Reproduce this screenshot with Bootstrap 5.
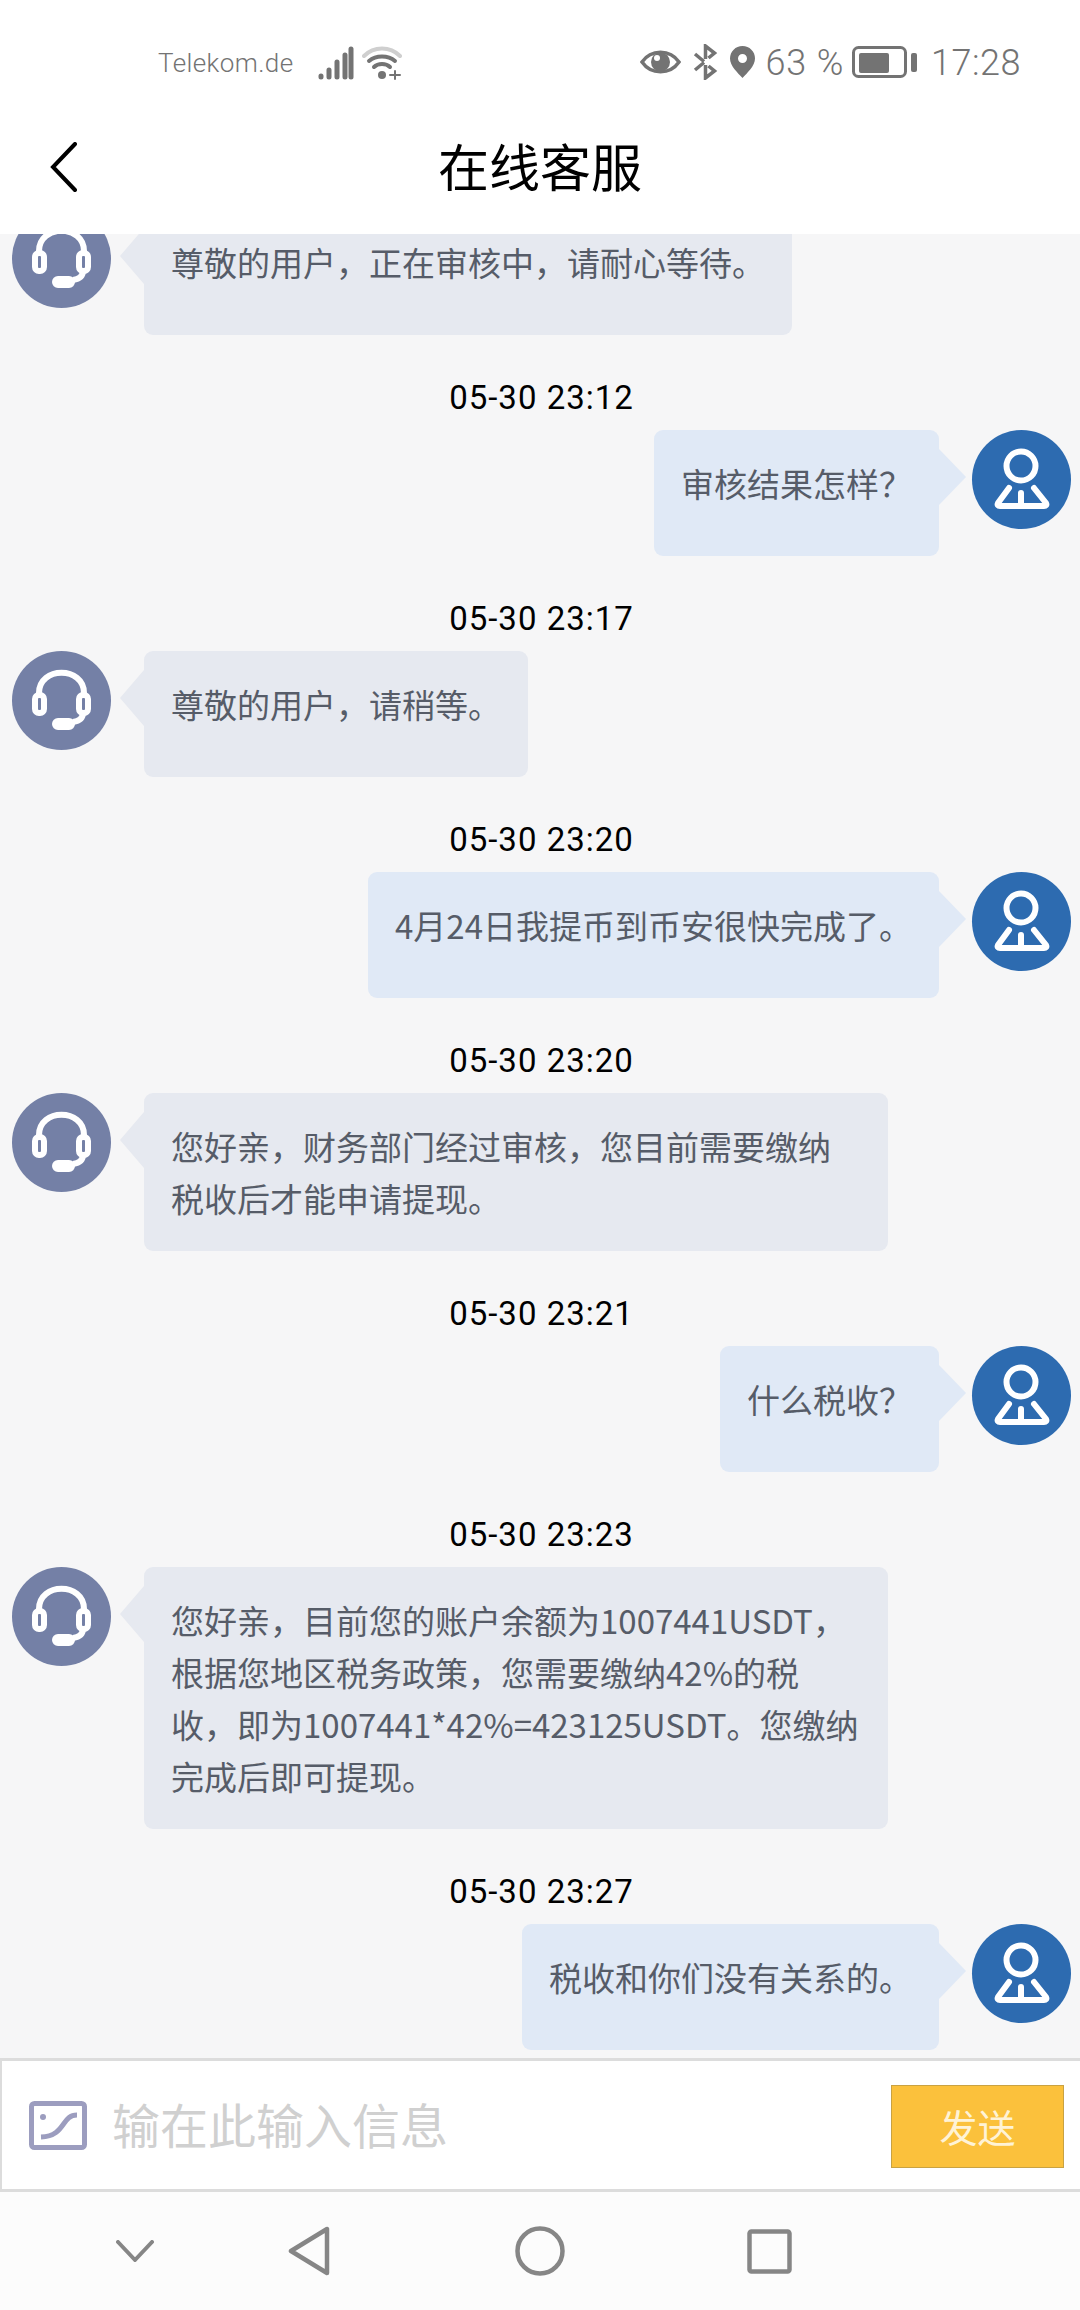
<!DOCTYPE html>
<html lang="zh">
<head>
  <meta charset="UTF-8" />
  <title>在线客服</title>
  <link href="https://cdn.jsdelivr.net/npm/bootstrap@5.3.3/dist/css/bootstrap.min.css" rel="stylesheet">
  <style>
    body { width: 1080px; height: 2310px; overflow: hidden; background: #fff; font-family: "Noto Sans CJK SC", Roboto, sans-serif; }
    .status-bar { height: 100px; padding: 26px 59px 0 158px; color: #737373; font-family: Roboto, sans-serif; }
    .carrier { font-size: 26px; font-weight: 300; letter-spacing: .4px; width: 160px; }
    .status-eye { margin-top: -2px; }
    .status-bt { margin-left: 11px; margin-top: -2px; }
    .status-pin { margin-left: 11px; margin-top: -2px; }
    .status-pct { font-size: 36px; font-weight: 300; margin: 0 8px 0 11px; letter-spacing: .8px; }
    .status-batt { margin-top: -2px; }
    .status-time { font-size: 36px; font-weight: 300; margin-left: 13px; letter-spacing: .5px; }
    .title-bar { height: 134px; display: grid; grid-template-columns: 1fr auto 1fr; align-items: center; padding-left: 50px; }
    .title-text { font-size: 51px; line-height: 60px; color: #000; margin-right: 50px; margin-top: -5px; }
    .chat-area { height: 1824px; overflow: hidden; background: #f6f6f7; padding: 0 9px 0 12px; }
    .first-msg { margin-top: -25px; }
    .msg-time { font-family: Roboto, sans-serif; font-size: 33px; line-height: 40px; letter-spacing: 1px; text-align: center; color: #000; margin: 43px 0 12px; }
    .avatar-round { width: 99px; height: 99px; flex: 0 0 99px; border-radius: 50%; }
    .avatar-kefu { background: #7480a6; }
    .avatar-user { background: #2d6bb0; }
    .bubble { position: relative; max-width: 744px; min-height: 126px; padding: 27px 27px 27px; border-radius: 9px; font-size: 33px; line-height: 52px; color: #565c68; word-break: break-all; }
    .bubble::before { content: ""; position: absolute; top: 19px; border-top: 28px solid transparent; border-bottom: 28px solid transparent; }
    .bubble-kefu { background: #e6e9f0; margin-left: 33px; }
    .bubble-kefu::before { left: -24px; border-right: 24px solid #e6e9f0; }
    .bubble-user { background: #e0e9f6; margin-right: 33px; }
    .bubble-user::before { right: -27px; border-left: 27px solid #e0e9f6; }
    .input-bar { height: 134px; background: #fff; border-top: 3px solid #dcdcdc; border-bottom: 3px solid #dcdcdc; border-left: 2px solid #dcdcdc; padding: 0 16px 0 27px; }
    .input-hint { font-size: 48px; line-height: 60px; color: #d0d0d0; margin-left: 25px; margin-top: -4px; }
    .send-btn { width: 173px; height: 83px; padding: 0; margin-top: 2px; border-radius: 0; background: #fbc13c; border: 1px solid #c9a242; color: #fff3d6; font-size: 38px; line-height: 1; }
    .nav-bar { height: 118px; background: #fcfcfc; padding-left: 116px; }
    .nav-back { margin-left: 134px; }
    .nav-home { margin-left: 185px; }
    .nav-recent { margin-left: 182px; }
  </style>
</head>
<body class="d-flex flex-column">

  <div class="status-bar d-flex justify-content-between align-items-center">
    <div class="d-flex align-items-center">
      <span class="carrier">Telekom.de</span>
      <svg width="36" height="34" viewBox="0 0 36 34"><g stroke="#737373" stroke-width="5" stroke-linecap="round"><path d="M3 30v1M11 24v7M19 16v15M27 9v22"/><path d="M33 3v28"/></g></svg>
      <svg class="ms-2" width="40" height="34" viewBox="0 0 40 34" fill="none" stroke-linecap="round"><path d="M2 10C12 0 28 0 38 10" stroke="#cfcfcf" stroke-width="4"/><path d="M7 15c7-6 19-6 26 0" stroke="#737373" stroke-width="4"/><path d="M12 21c4-4 12-4 16 0" stroke="#737373" stroke-width="4"/><circle cx="20" cy="29" r="4" fill="#737373"/><path d="M28 29h10M33 25v8" stroke="#737373" stroke-width="2"/></svg>
    </div>
    <div class="d-flex align-items-center">
      <svg class="status-eye" width="41" height="28" viewBox="0 0 41 28"><path d="M2 14C11 1 30 1 39 14 30 27 11 27 2 14Z" fill="none" stroke="#737373" stroke-width="3.5"/><circle cx="20.5" cy="14" r="9.5" fill="#737373"/><circle cx="17" cy="10" r="3" fill="#fff"/></svg>
      <svg class="status-bt" width="27" height="36" viewBox="0 0 27 36" fill="none" stroke="#737373" stroke-width="3.500"><path d="M3 10l9 7.500M3 26l9-7.500M13.500 15V2l9 7-6 5M13.500 21v13l9-7-6-5"/></svg>
      <svg class="status-pin" width="25" height="32" viewBox="0 0 25 32"><path fill-rule="evenodd" fill="#737373" d="M12.5 0C5.5 0 0 5.500 0 12.500 0 20 8 27 12.500 32 17 27 25 20 25 12.500 25 5.500 19.500 0 12.500 0ZM12.500 8a4.500 4.500 0 1 1 0 9 4.500 4.500 0 0 1 0-9Z"/></svg>
      <span class="status-pct">63 %</span>
      <svg class="status-batt" width="66" height="32" viewBox="0 0 66 32"><rect x="1.500" y="1.500" width="52" height="29" rx="5" fill="none" stroke="#737373" stroke-width="3"/><rect x="7" y="7" width="30" height="20" rx="2" fill="#737373"/><rect x="59" y="7" width="6" height="19" rx="2" fill="#737373"/></svg>
      <span class="status-time">17:28</span>
    </div>
  </div>

  <div class="title-bar">
    <svg width="27" height="50" viewBox="0 0 27 50" fill="none" stroke="#000" stroke-width="4" stroke-linecap="round"><path d="M25 2 3 25l22 23"/></svg>
    <div class="title-text">在线客服</div>
  </div>

  <div class="chat-area">
    <div class="d-flex align-items-start first-msg">
      <div class="avatar-round avatar-kefu"><svg width="99" height="99" viewBox="0 0 99 99" fill="none" stroke="#fff" stroke-width="6"><path d="M27 44V42C27 15 72 15 72 42V44"/><rect x="23" y="44" width="9" height="18" rx="4"/><rect x="67" y="44" width="9" height="18" rx="4"/><path d="M71 62c0 5-4 8-10 9"/><rect x="43" y="70" width="17" height="6" rx="3"/></svg></div>
      <div class="bubble bubble-kefu">尊敬的用户，正在审核中，请耐心等待。</div>
    </div>

    <div class="msg-time">05-30 23:12</div>
    <div class="d-flex align-items-start justify-content-end">
      <div class="bubble bubble-user">审核结果怎样？</div>
      <div class="avatar-round avatar-user"><svg width="99" height="99" viewBox="0 0 99 99" fill="none" stroke="#fff" stroke-width="6" stroke-linejoin="round" stroke-linecap="round"><circle cx="49" cy="36" r="14.500"/><path d="M37 58 26 73c-1 2 0 3 2 3h44c2 0 3-1 2-3L62 58M49 63v13"/></svg></div>
    </div>

    <div class="msg-time">05-30 23:17</div>
    <div class="d-flex align-items-start">
      <div class="avatar-round avatar-kefu"><svg width="99" height="99" viewBox="0 0 99 99" fill="none" stroke="#fff" stroke-width="6"><path d="M27 44V42C27 15 72 15 72 42V44"/><rect x="23" y="44" width="9" height="18" rx="4"/><rect x="67" y="44" width="9" height="18" rx="4"/><path d="M71 62c0 5-4 8-10 9"/><rect x="43" y="70" width="17" height="6" rx="3"/></svg></div>
      <div class="bubble bubble-kefu">尊敬的用户，请稍等。</div>
    </div>

    <div class="msg-time">05-30 23:20</div>
    <div class="d-flex align-items-start justify-content-end">
      <div class="bubble bubble-user">4月24日我提币到币安很快完成了。</div>
      <div class="avatar-round avatar-user"><svg width="99" height="99" viewBox="0 0 99 99" fill="none" stroke="#fff" stroke-width="6" stroke-linejoin="round" stroke-linecap="round"><circle cx="49" cy="36" r="14.500"/><path d="M37 58 26 73c-1 2 0 3 2 3h44c2 0 3-1 2-3L62 58M49 63v13"/></svg></div>
    </div>

    <div class="msg-time">05-30 23:20</div>
    <div class="d-flex align-items-start">
      <div class="avatar-round avatar-kefu"><svg width="99" height="99" viewBox="0 0 99 99" fill="none" stroke="#fff" stroke-width="6"><path d="M27 44V42C27 15 72 15 72 42V44"/><rect x="23" y="44" width="9" height="18" rx="4"/><rect x="67" y="44" width="9" height="18" rx="4"/><path d="M71 62c0 5-4 8-10 9"/><rect x="43" y="70" width="17" height="6" rx="3"/></svg></div>
      <div class="bubble bubble-kefu">您好亲，财务部门经过审核，您目前需要缴纳税收后才能申请提现。</div>
    </div>

    <div class="msg-time">05-30 23:21</div>
    <div class="d-flex align-items-start justify-content-end">
      <div class="bubble bubble-user">什么税收？</div>
      <div class="avatar-round avatar-user"><svg width="99" height="99" viewBox="0 0 99 99" fill="none" stroke="#fff" stroke-width="6" stroke-linejoin="round" stroke-linecap="round"><circle cx="49" cy="36" r="14.500"/><path d="M37 58 26 73c-1 2 0 3 2 3h44c2 0 3-1 2-3L62 58M49 63v13"/></svg></div>
    </div>

    <div class="msg-time">05-30 23:23</div>
    <div class="d-flex align-items-start">
      <div class="avatar-round avatar-kefu"><svg width="99" height="99" viewBox="0 0 99 99" fill="none" stroke="#fff" stroke-width="6"><path d="M27 44V42C27 15 72 15 72 42V44"/><rect x="23" y="44" width="9" height="18" rx="4"/><rect x="67" y="44" width="9" height="18" rx="4"/><path d="M71 62c0 5-4 8-10 9"/><rect x="43" y="70" width="17" height="6" rx="3"/></svg></div>
      <div class="bubble bubble-kefu">您好亲，目前您的账户余额为1007441USDT，根据您地区税务政策，您需要缴纳42%的税收，即为1007441*42%=423125USDT。您缴纳完成后即可提现。</div>
    </div>

    <div class="msg-time">05-30 23:27</div>
    <div class="d-flex align-items-start justify-content-end">
      <div class="bubble bubble-user">税收和你们没有关系的。</div>
      <div class="avatar-round avatar-user"><svg width="99" height="99" viewBox="0 0 99 99" fill="none" stroke="#fff" stroke-width="6" stroke-linejoin="round" stroke-linecap="round"><circle cx="49" cy="36" r="14.500"/><path d="M37 58 26 73c-1 2 0 3 2 3h44c2 0 3-1 2-3L62 58M49 63v13"/></svg></div>
    </div>
  </div>

  <div class="input-bar d-flex align-items-center">
    <svg width="58" height="49" viewBox="0 0 58 49" fill="none" stroke="#9c9dbf"><rect x="2.500" y="2.500" width="53" height="44" rx="3" stroke-width="5"/><circle cx="14" cy="16" r="3" fill="#9c9dbf" stroke="none"/><path d="M48 14c-16 0-11 21-36 22" stroke-width="5"/></svg>
    <div class="input-hint flex-grow-1">输在此输入信息</div>
    <button class="btn send-btn" type="button">发送</button>
  </div>

  <div class="nav-bar d-flex align-items-center">
    <svg width="38" height="22" viewBox="0 0 38 22" fill="none" stroke="#868686" stroke-width="4" stroke-linecap="round" stroke-linejoin="round"><path d="M2 2l17 18L36 2"/></svg>
    <svg class="nav-back" width="42" height="50" viewBox="0 0 42 50" fill="none" stroke="#868686" stroke-width="4.500" stroke-linejoin="round"><path d="M39 3v44L3 25Z"/></svg>
    <svg class="nav-home" width="50" height="50" viewBox="0 0 50 50" fill="none" stroke="#868686" stroke-width="4.500"><circle cx="25" cy="25" r="22.500"/></svg>
    <svg class="nav-recent" width="45" height="45" viewBox="0 0 45 45" fill="none" stroke="#868686" stroke-width="4.500" stroke-linejoin="round"><rect x="2.500" y="2.500" width="40" height="40" rx="2"/></svg>
  </div>

  <script src="https://cdn.jsdelivr.net/npm/bootstrap@5.3.3/dist/js/bootstrap.bundle.min.js"></script>
</body>
</html>
